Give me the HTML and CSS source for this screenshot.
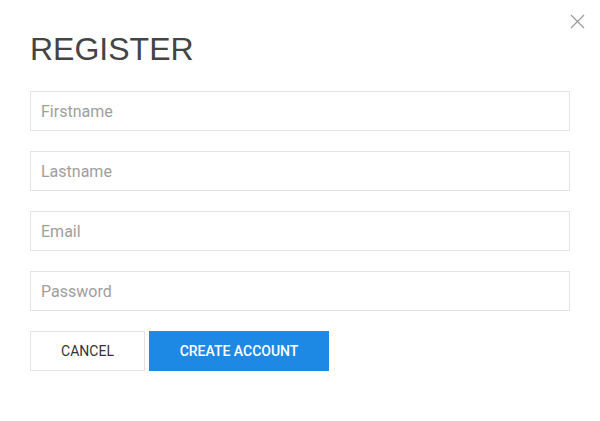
FILE: index.html
```html
<!DOCTYPE html>
<html>
<head>
<meta charset="utf-8">
<link rel="stylesheet" href="styles.css">
</head>
<body>
<div class="modal">
  <button class="close" aria-label="Close">
    <svg width="15" height="15" viewBox="0 0 15 15"><path d="M1 1L14 14M14 1L1 14" stroke="#9a9a9a" stroke-width="1.2" fill="none"/></svg>
  </button>
  <h1 class="title">REGISTER</h1>
  <form class="form">
    <input class="field" type="text" placeholder="Firstname">
    <input class="field" type="text" placeholder="Lastname">
    <input class="field" type="email" placeholder="Email">
    <input class="field" type="password" placeholder="Password">
    <div class="actions">
      <button type="button" class="btn btn-cancel">CANCEL</button>
      <button type="button" class="btn btn-primary">CREATE ACCOUNT</button>
    </div>
  </form>
</div>
</body>
</html>
```
FILE: styles.css
```css
html, body {
  margin: 0;
  padding: 0;
  background: #fff;
}
.modal {
  position: relative;
  padding: 31px 30px 0 30px;
  width: 540px;
}
.close {
  position: absolute;
  top: 14px;
  right: 15px;
  width: 15px;
  height: 15px;
  padding: 0;
  border: 0;
  background: none;
  cursor: pointer;
}
.close svg { display: block; }
.title {
  margin: 0 0 23px 0;
  font-family: "Liberation Sans", Arial, sans-serif;
  font-weight: normal;
  font-size: 32px;
  line-height: 37px;
  color: #444;
}
.form {
  display: flex;
  flex-direction: column;
  gap: 20px;
}
.field {
  box-sizing: border-box;
  width: 540px;
  height: 40px;
  margin: 0;
  padding: 0 10px;
  border: 1px solid #e3e3e3;
  font-family: Roboto, sans-serif;
  font-size: 16px;
  color: #333;
  outline: none;
}
.field::placeholder { color: #9e9e9e; }
.actions {
  display: flex;
  gap: 4px;
}
.btn {
  box-sizing: border-box;
  height: 40px;
  margin: 0;
  font-family: Roboto, sans-serif;
  font-size: 14px;
  font-weight: 500;
  cursor: pointer;
}
.btn-cancel {
  width: 115px;
  background: #fff;
  border: 1px solid #e3e3e3;
  color: #333;
  font-weight: normal;
}
.btn-primary {
  width: 180px;
  background: #1e88e5;
  border: 0;
  color: #fff;
}
```
